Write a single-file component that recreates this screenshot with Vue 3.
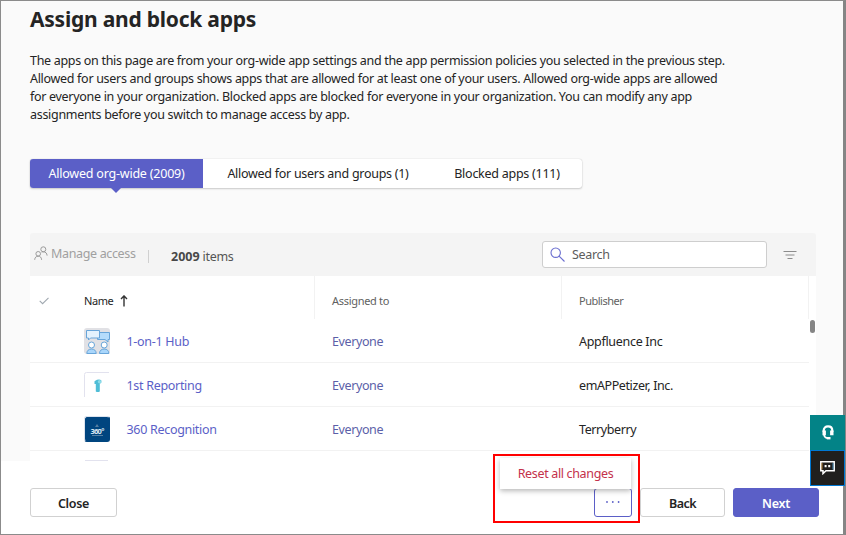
<script setup>
import { ref } from 'vue'

const tabs = [
  { id: 'org', label: 'Allowed org-wide (2009)' },
  { id: 'groups', label: 'Allowed for users and groups (1)' },
  { id: 'blocked', label: 'Blocked apps (111)' },
]
const active = ref('org')

const apps = [
  { icon: 'hub', name: '1-on-1 Hub', assigned: 'Everyone', publisher: 'Appfluence Inc' },
  { icon: 'first', name: '1st Reporting', assigned: 'Everyone', publisher: 'emAPPetizer, Inc.' },
  { icon: 'rec', name: '360 Recognition', assigned: 'Everyone', publisher: 'Terryberry' },
]
</script>

<template>
  <div class="window">
    <main class="content">
      <h1>Assign and block apps</h1>
      <p class="intro">
        The apps on this page are from your org-wide app settings and the app permission policies you selected in the previous step.<br />
        Allowed for users and groups shows apps that are allowed for at least one of your users. Allowed org-wide apps are allowed<br />
        for everyone in your organization. Blocked apps are blocked for everyone in your organization. You can modify any app<br />
        assignments before you switch to manage access by app.
      </p>

      <div class="tabs">
        <button
          v-for="tab in tabs"
          :key="tab.id"
          :class="['tab', tab.id, { active: tab.id === active }]"
          @click="active = tab.id"
        >{{ tab.label }}</button>
      </div>

      <section class="panel">
        <div class="toolbar">
          <svg class="people" width="14" height="15" viewBox="0 0 14 15" fill="none" stroke="#9a9a9a" stroke-width="1">
            <circle cx="4.200" cy="7.800" r="2.300" />
            <path d="M.7 13.800c.1-2.300 1.400-3.600 3.500-3.600s3.300 1.300 3.400 3.600" />
            <circle cx="9.300" cy="3.300" r="2.500" />
            <path d="M7.700 6.300c.5-.4 1-.5 1.600-.5 2.200 0 3.700 1.400 3.800 3.800" />
          </svg>
          <span class="manage">Manage access</span>
          <span class="divider"></span>
          <span class="count"><b>2009</b> items</span>
          <div class="search">
            <svg width="16" height="16" viewBox="0 0 16 16" fill="none" stroke="#6b6fd0" stroke-width="1.100">
              <circle cx="5.700" cy="5.700" r="4.700" />
              <path d="M9.100 9.100 14.500 14.500" />
            </svg>
            <span>Search</span>
          </div>
          <svg class="filter" width="14" height="10" viewBox="0 0 14 10" stroke="#8c8c8c" stroke-width="1.200">
            <path d="M.5 1.500h13M2.500 5h9M4.500 8.500h5" />
          </svg>
        </div>

        <div class="table">
          <div class="row head">
            <div class="cell check">
              <svg width="10" height="8" viewBox="0 0 10 8" fill="none" stroke="#a0a8b0" stroke-width="1.100"><path d="M.7 3.800 3.600 6.700 9.500.8" /></svg>
            </div>
            <div class="cell name">
              <span>Name</span>
              <svg width="8" height="12" viewBox="0 0 8 12" fill="none" stroke="#333" stroke-width="1.400"><path d="M4 11.500V1M1 3.900 4 .9l3 3" /></svg>
            </div>
            <div class="cell assigned">Assigned to</div>
            <div class="cell publisher">Publisher</div>
          </div>
          <div v-for="app in apps" :key="app.name" class="row">
            <div class="cell check"></div>
            <div class="cell name">
              <svg v-if="app.icon === 'hub'" class="icon" width="26" height="26" viewBox="0 0 26 26">
                <rect width="26" height="26" rx="3" fill="#e1e1e5" />
                <g stroke="#68a5d9" stroke-width="1">
                  <path d="M13.500 4.500h12v7h-1.500v2.500l-3-2.500h-7.500z" fill="#b5dcfb" />
                  <path d="M2.500 2.500h13v7.500h-9L4.500 12v-2h-2z" fill="#e4f2fd" />
                  <path d="M2.800 25.500c0-2.800 1.900-4.500 4.700-4.500s4.700 1.700 4.700 4.500zM15.500 25.500c0-2.800 1.900-4.500 4.700-4.500s4.700 1.700 4.700 4.500z" fill="#a9d6fb" />
                  <circle cx="7.500" cy="17" r="3" fill="#fff" /><circle cx="20.200" cy="17" r="3" fill="#fff" />
                </g>
              </svg>
              <svg v-else-if="app.icon === 'first'" class="icon" width="26" height="26" viewBox="0 0 26 26">
                <path d="M.5 25V2.500q0-2 2-2H25" fill="none" stroke="#e2e2ee" />
                <path d="M10.500 9.300 13 7.800q2.500-1 4.300.4v2.500l-1.500 1V19.500q-2 1.200-4 0V12h-1.300z" fill="#4fbdd6" />
                <circle cx="15.600" cy="9.700" r="1.800" fill="#8cdbe8" />
              </svg>
              <div v-else class="icon rec">
                <svg width="4" height="3" viewBox="0 0 4 3"><path d="M2 0 4 3H0z" fill="#557d9f" /></svg>
                <span>360°</span>
                <i></i>
              </div>
              <span class="link">{{ app.name }}</span>
            </div>
            <div class="cell assigned"><span>{{ app.assigned }}</span></div>
            <div :class="['cell', 'publisher', app.icon]"><span>{{ app.publisher }}</span></div>
          </div>
          <div class="row peek"><i></i></div>
        </div>
        <div class="thumb"></div>
      </section>
    </main>

    <footer>
      <button class="btn close">Close</button>
      <button class="btn more">
        <svg width="14" height="2" viewBox="0 0 14 2" fill="#5b5fc7"><circle cx="1" cy="1" r=".9" /><circle cx="6.800" cy="1" r=".9" /><circle cx="12.600" cy="1" r=".9" /></svg>
      </button>
      <button class="btn back">Back</button>
      <button class="btn next">Next</button>
    </footer>

    <div class="menu">Reset all changes</div>
    <div class="highlight"></div>

    <aside class="dock">
      <div class="help">
        <svg width="12" height="15" viewBox="0 0 12 15" fill="none" stroke="#fff">
          <path d="M1.700 7V5.500C1.700 2.900 3.500 1.300 6 1.300s4.300 1.600 4.300 4.200V7" stroke-width="2.200" />
          <path d="M2.200 5.500v4.700M9.800 5.500v4.700" stroke-width="3.400" />
          <path d="M2 9.500c.2 2.200 1.500 3.400 3.400 3.600" stroke-width="1.700" />
          <path d="M4.800 13.200h3.700" stroke-width="2.400" />
        </svg>
      </div>
      <div class="feedback">
        <svg width="15" height="14" viewBox="0 0 15 14" fill="none" stroke="#fff" stroke-width="1.500">
          <path d="M.8.8h13.400v9H6L3 12.600V9.800H.8z" />
          <path d="M2 2v6.500" stroke="#d99a3c" stroke-width=".8" />
          <path d="M13 2v6.500" stroke="#4aa3dc" stroke-width=".8" />
          <path d="M5.600 4v2.200M9.200 4v2.200" stroke-width="2" />
        </svg>
      </div>
    </aside>
  </div>
</template>

<style>
body { margin: 0; }
</style>

<style scoped>
* { box-sizing: border-box; }
.window {
  position: relative;
  display: flex;
  flex-direction: column;
  width: 846px;
  height: 535px;
  background: #fff;
  border: 1px solid #8b8b8b;
  border-right: 3px solid #858585;
  color: #242424;
  font: 12.5px/18px "Noto Sans", "Open Sans", sans-serif;
  letter-spacing: -0.305px;
}
button { font: inherit; letter-spacing: inherit; color: inherit; padding: 0; }
.content { height: 460px; padding: 0 26px 0 29px; background: #fafafa; overflow: hidden; }
h1 { margin: 4px 0 19px; font-size: 21px; line-height: 28px; font-weight: 700; letter-spacing: -0.23px; }
.intro { margin: 0; white-space: nowrap; }
.tabs {
  display: flex;
  width: 552px;
  height: 29px;
  margin-top: 35px;
  background: #fff;
  border-radius: 3px;
  box-shadow: 0 0 1px #bbb, 0 1px 2px #ccc;
}
.tab { position: relative; border: 0; background: none; letter-spacing: -0.28px; }
.tab.org { width: 173px; letter-spacing: -0.21px; }
.tab.groups { width: 229px; padding-left: 1px; }
.tab.blocked { width: 150px; letter-spacing: -0.26px; }
.tab.active { background: #5b5fc7; color: #fff; border-radius: 3px 0 0 3px; }
.tab.active::after {
  content: "";
  position: absolute;
  left: 81px;
  top: 29px;
  border: 5px solid transparent;
  border-top-color: #5b5fc7;
  border-bottom: 0;
}
.panel { position: relative; width: 786px; margin-top: 45px; }
.toolbar {
  display: flex;
  align-items: center;
  height: 43px;
  padding-left: 4px;
  background: #f4f4f4;
  border-radius: 3px 3px 0 0;
}
.toolbar > * { flex: none; }
.people { margin-top: -3px; }
.manage { width: 97px; margin: -2px 0 0 3px; color: #a0a0a0; letter-spacing: -0.35px; }
.divider { width: 1px; height: 13px; margin-top: 4px; background: #d0d0d0; }
.count { width: 393px; padding-left: 22px; margin-top: 5px; color: #555; }
.count b { color: #484848; letter-spacing: 0; }
.search {
  display: flex;
  align-items: center;
  width: 225px;
  height: 27px;
  padding-left: 7px;
  background: #fff;
  border: 1px solid #cecece;
  border-radius: 3px;
  color: #5c5c5c;
}
.search span { margin-left: 6px; }
.filter { margin-left: 16px; }
.table { height: 185px; background: #fff; }
.row { display: grid; grid-template-columns: 54px 231px 247px 247px; width: 779px; height: 44px; border-bottom: 1px solid #f2f2f2; }
.cell { display: flex; align-items: center; }
.head { height: 43px; border: 0; font-size: 11px; color: #616161; }
.head .cell { border-right: 1px solid #f2f2f2; padding-top: 7px; }
.head .check { border-right: 0; padding-left: 9px; padding-top: 6px; }
.head .name { color: #242424; gap: 7px; }
.head .name span { letter-spacing: -0.45px; }
.cell.assigned, .cell.publisher { padding-left: 17px; }
.head .publisher { letter-spacing: -0.5px; }
.name .icon { margin-top: 1px; flex: none; }
.row:not(.head) .cell > span { padding-top: 2px; }
.link { margin-left: 16.500px; color: #5b5fc7; }
.row:not(.head) .assigned { color: #5b5fa8; letter-spacing: -0.4px; }
.publisher.first, .publisher.rec { letter-spacing: -0.4px; }
.rec.icon {
  display: flex;
  flex-direction: column;
  align-items: center;
  width: 26px;
  height: 26px;
  padding-top: 7px;
  background: #00457f;
  border: 1px solid #dce3ee;
  border-right-color: #00457f;
  border-bottom-color: #00457f;
  border-radius: 3px;
}
.rec.icon span { font-size: 7.500px; line-height: 8px; font-weight: 700; color: #dce8f2; letter-spacing: -0.7px; }
.rec.icon i { width: 11px; height: 1px; background: #5580a5; }
.peek { display: block; height: 10px; border: 0; padding: 9px 0 0 55px; }
.peek i { display: block; width: 23px; height: 1px; background: #e2e2ee; }
.thumb { position: absolute; left: 780px; top: 87px; width: 5px; height: 13px; border-radius: 3px; background: #858585; }
footer { display: flex; gap: 8px; padding: 27px 24px 0 29px; }
.btn {
  display: flex;
  align-items: center;
  justify-content: center;
  height: 29px;
  padding-top: 2px;
  background: #fff;
  border: 1px solid #d1d1d1;
  border-radius: 3px;
  font-weight: 600;
}
.close { width: 87px; }
.more { width: 38px; margin-left: auto; border-color: #5b5fc7; padding: 0 0 2px; }
.back { width: 85px; letter-spacing: -0.5px; }
.next { width: 86px; background: #5b5fc7; border-color: #5b5fc7; color: #fff; }
.menu {
  position: absolute;
  left: 499px;
  top: 457px;
  width: 131px;
  height: 31px;
  background: #fff;
  box-shadow: 0 2px 5px rgba(0, 0, 0, .28);
  color: #c4314b;
  line-height: 31px;
  letter-spacing: -0.34px;
  text-align: center;
}
.highlight { position: absolute; left: 492px; top: 453px; width: 147px; height: 69px; border: 2px solid #f00; }
.dock { position: absolute; right: -2px; top: 414px; width: 35px; }
.dock div { display: flex; align-items: center; justify-content: center; height: 35px; }
.help { background: #038387; }
.dock .feedback { height: 36px; background: #201f1e; border: 1px solid #0078d4; }
</style>
